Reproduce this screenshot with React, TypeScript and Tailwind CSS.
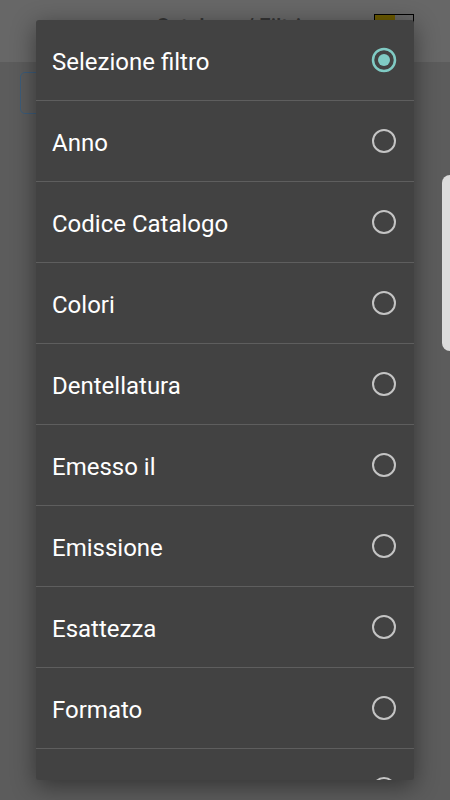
const filters = [
  "Selezione filtro",
  "Anno",
  "Codice Catalogo",
  "Colori",
  "Dentellatura",
  "Emesso il",
  "Emissione",
  "Esattezza",
  "Formato",
  "Valore",
];

function Radio({ checked }: { checked: boolean }) {
  if (checked) {
    return (
      <svg width="28" height="28" viewBox="0 0 28 28">
        <circle cx="14" cy="14" r="11" fill="none" stroke="#80cbc4" strokeWidth="2.5" />
        <circle cx="14" cy="14" r="6" fill="#80cbc4" />
      </svg>
    );
  }
  return (
    <svg width="28" height="28" viewBox="0 0 28 28">
      <circle cx="14" cy="14" r="11" fill="none" stroke="#c4c4c4" strokeWidth="2" />
    </svg>
  );
}

export default function App() {
  const selected = 0;

  return (
    <div className="relative w-[450px] h-[800px] overflow-hidden bg-[#5c5c5c] font-['Roboto',sans-serif]">
      <header className="h-[62px] bg-[#676767] flex items-start">
        <div className="ml-[156px] mt-[12px] text-[21px] leading-[28px] text-[#353535] font-medium">Catalogo / Filtri</div>
        <div className="ml-auto mr-[36px] mt-[14px] w-[40px] h-[30px] border border-black bg-[#666]">
          <div className="w-[20px] h-[6px] bg-[#6b5a00]" />
        </div>
      </header>
      <div className="flex justify-between mt-[10px]">
        <div className="ml-[20px] w-[60px] h-[42px] rounded-[5px] border border-[#3d5c7a]" />
        <div className="mt-[103px] w-[8px] h-[176px] rounded-l-[8px] bg-[#dcdcdc]" />
      </div>

      <div className="absolute left-[36px] top-[20px] w-[378px] h-[760px] rounded-[3px] bg-[#424242] overflow-hidden shadow-[0_6px_24px_rgba(0,0,0,0.45)]">
        {filters.map((f, i) => (
          <div key={f} className="h-[81px] flex items-center justify-between pl-[16px] pr-[16px] border-b border-[#5e5e5e]">
            <span className="text-[24px] leading-[28px] text-white pt-[3px]">{f}</span>
            <Radio checked={i === selected} />
          </div>
        ))}
      </div>
    </div>
  );
}
